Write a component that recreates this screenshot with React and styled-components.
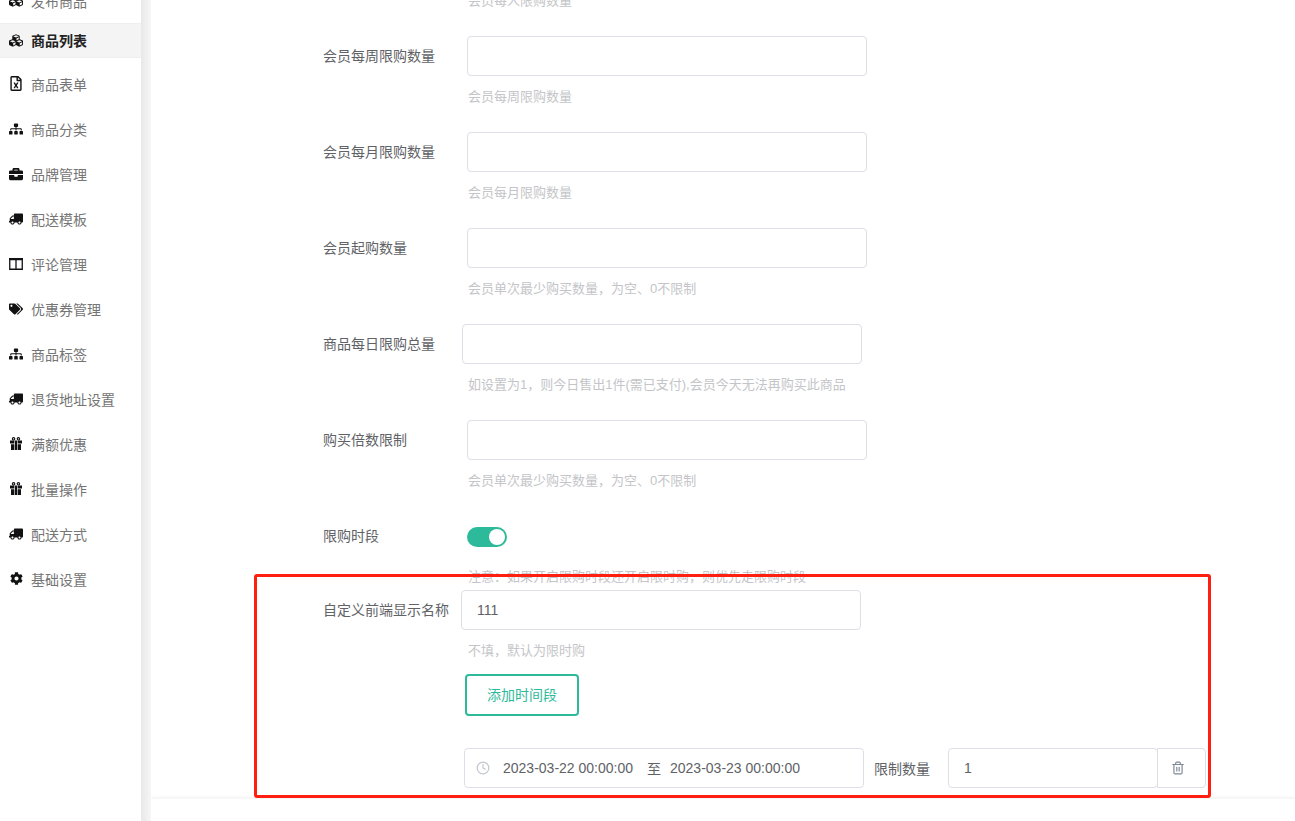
import React from "react";
import styled, { createGlobalStyle } from "styled-components";
import { FaCubes, FaRegFileExcel, FaSitemap, FaBriefcase, FaTruck, FaTags, FaCog } from "react-icons/fa";
import { FiClock, FiTrash2 } from "react-icons/fi";

const GlobalStyle = createGlobalStyle`
  html, body {
    margin: 0;
    height: 100%;
    overflow: hidden;
    background: #fff;
    font-family: "Liberation Sans", "Noto Sans CJK SC", sans-serif;
    font-size: 14px;
    color: #606266;
  }
  * { box-sizing: border-box; }
`;

const Page = styled.div`
  position: relative;
  display: flex;
  width: 1295px;
  height: 821px;
  overflow: hidden;
`;

const Sidebar = styled.nav`
  width: 141px;
  flex-shrink: 0;
  background: #fff;
  margin-top: -22px;
`;

const MenuItem = styled.div`
  display: flex;
  align-items: center;
  height: ${(p) => (p.$active ? "35px" : "45px")};
  padding-left: 9px;
  padding-bottom: ${(p) => (p.$active ? "1px" : "0")};
  margin-bottom: ${(p) => (p.$active ? "3px" : "0")};
  color: ${(p) => (p.$active ? "#222" : "#757575")};
  font-weight: ${(p) => (p.$active ? 700 : 400)};
  background: ${(p) => (p.$active ? "#f4f4f4" : "#fff")};
  border-top: ${(p) => (p.$active ? "1px solid #eee" : "none")};
  border-bottom: ${(p) => (p.$active ? "1px solid #eee" : "none")};
`;

const MenuIcon = styled.span`
  display: flex;
  justify-content: center;
  width: 14px;
  margin-right: 8px;
  color: #111;
  font-size: ${(p) => p.$size || 14}px;
  transform: ${(p) => (p.$flip ? "scaleX(-1)" : "none")};
`;

const Gutter = styled.div`
  width: 10px;
  flex-shrink: 0;
  background: linear-gradient(90deg, #e8e8e8, #f6f6f6);
`;

const Main = styled.main`
  flex: 1;
  display: flex;
  flex-direction: column;
  min-width: 0;
`;

const Form = styled.div`
  height: 799px;
  overflow: hidden;
  padding-left: 172px;
`;

const Clip = styled.div`
  margin-top: -20px;
`;

const FootBar = styled.div`
  position: relative;
  flex: 1;
  background: #fff;
  box-shadow: 0 -2px 3px #f4f4f4;
`;

const Row = styled.div`
  display: flex;
  align-items: center;
  height: 40px;
`;

const Label = styled.label`
  flex-shrink: 0;
  width: ${(p) => p.$w || 144}px;
  color: #606266;
  line-height: 20px;
`;

const Field = styled.div`
  display: flex;
  align-items: center;
  width: ${(p) => p.$w || 400}px;
  height: 40px;
  padding: 0 15px;
  background: #fff;
  border: 1px solid #dcdfe6;
  border-radius: 4px;
  color: #606266;
`;

const Help = styled.div`
  height: 56px;
  padding-top: 11px;
  padding-left: 145px;
  color: #c4c5c8;
  font-size: 13px;
  line-height: 20px;
`;

const Switch = styled.span`
  position: relative;
  display: block;
  width: 40px;
  height: 20px;
  border-radius: 10px;
  background: #2dba9a;
`;

const Knob = styled.span`
  position: absolute;
  top: 2px;
  right: 2px;
  width: 16px;
  height: 16px;
  border-radius: 50%;
  background: #fff;
`;

const SwitchRow = styled(Row)`
  height: 20px;
  margin-top: 11px;
`;

const SwitchLabel = styled(Label)`
  padding-bottom: 2px;
`;

const Note = styled.div`
  padding-left: 145px;
  margin-top: 20px;
  height: 23px;
  font-size: 13px;
  line-height: 20px;
  color: #c4c5c8;
`;

const AddButton = styled.button`
  display: block;
  width: 114px;
  height: 42px;
  margin: -12px 0 32px 142px;
  padding: 0 0 2px;
  background: #fff;
  border: 2px solid #2dba9a;
  border-radius: 4px;
  color: #2dba9a;
  font: inherit;
`;

const TimeRow = styled.div`
  display: flex;
  align-items: center;
  height: 40px;
  padding-left: 141px;
`;

const DateField = styled(Field)`
  padding: 0 0 0 11px;
`;

const ClockIcon = styled(FiClock)`
  flex-shrink: 0;
  color: #c0c4cc;
  font-size: 14px;
  margin-right: 13px;
`;

const DateText = styled.span`
  width: 130px;
  white-space: nowrap;
`;

const Sep = styled.span`
  width: 37px;
  padding-right: 9px;
  text-align: right;
`;

const TimeLabel = styled.span`
  margin: 0 18px 0 10px;
  color: #606266;
`;

const Group = styled.div`
  display: flex;
  width: 258px;
  height: 40px;
`;

const GroupInput = styled(Field)`
  width: 210px;
  flex-shrink: 0;
`;

const GroupAddon = styled.div`
  flex: 1;
  display: flex;
  align-items: center;
  justify-content: center;
  margin-left: -1px;
  padding-right: 7px;
  border: 1px solid #dcdfe6;
  border-radius: 0 4px 4px 0;
  color: #7f8796;
  font-size: 14px;
`;

const RedBox = styled.div`
  position: absolute;
  left: 254px;
  top: 574px;
  width: 957px;
  height: 224px;
  border: 3px solid #ff1f10;
  border-radius: 3px;
  pointer-events: none;
`;

const ColumnsIcon = () => (
  <svg width="14" height="12" viewBox="0 0 14 12" aria-hidden="true">
    <path d="M.75 1.5h12.5v9.75H.75z M7 1.5v9.75" fill="none" stroke="currentColor" strokeWidth="1.3" />
    <path d="M0 0h14v2H0z" fill="currentColor" />
  </svg>
);

const GiftIcon = () => (
  <svg width="12" height="13" viewBox="0 0 12 13" aria-hidden="true">
    <circle cx="3.6" cy="1.8" r="1.2" fill="none" stroke="currentColor" strokeWidth="1.1" />
    <circle cx="8.4" cy="1.8" r="1.2" fill="none" stroke="currentColor" strokeWidth="1.1" />
    <path d="M0 3.6h4.4v3H0z M7.6 3.6H12v3H7.6z M5 3.6h2v9.4H5z M1 7.2h3.4V13H1z M7.6 7.2H11V13H7.6z" fill="currentColor" />
  </svg>
);

const menu = [
  { icon: FaCubes, size: 17, text: "发布商品" },
  { icon: FaCubes, size: 17, text: "商品列表", active: true },
  { icon: FaRegFileExcel, size: 15, text: "商品表单" },
  { icon: FaSitemap, text: "商品分类" },
  { icon: FaBriefcase, text: "品牌管理" },
  { icon: FaTruck, text: "配送模板", flip: true },
  { icon: ColumnsIcon, text: "评论管理" },
  { icon: FaTags, text: "优惠券管理" },
  { icon: FaSitemap, text: "商品标签" },
  { icon: FaTruck, text: "退货地址设置", flip: true },
  { icon: GiftIcon, text: "满额优惠" },
  { icon: GiftIcon, text: "批量操作" },
  { icon: FaTruck, text: "配送方式", flip: true },
  { icon: FaCog, size: 13, text: "基础设置" },
];

const limits = [
  { label: "会员每周限购数量", help: "会员每周限购数量" },
  { label: "会员每月限购数量", help: "会员每月限购数量" },
  { label: "会员起购数量", help: "会员单次最少购买数量，为空、0不限制" },
  { label: "商品每日限购总量", help: "如设置为1，则今日售出1件(需已支付),会员今天无法再购买此商品", w: 139 },
  { label: "购买倍数限制", help: "会员单次最少购买数量，为空、0不限制" },
];

export default function App() {
  return (
    <Page>
      <GlobalStyle />
      <Sidebar>
        {menu.map((m) => (
          <MenuItem key={m.text} $active={m.active}>
            <MenuIcon $flip={m.flip} $size={m.size}>
              <m.icon />
            </MenuIcon>
            {m.text}
          </MenuItem>
        ))}
      </Sidebar>
      <Gutter />
      <Main>
        <Form>
          <Clip>
            <Help>会员每人限购数量</Help>
            {limits.map((r) => (
              <React.Fragment key={r.label}>
                <Row>
                  <Label $w={r.w}>{r.label}</Label>
                  <Field />
                </Row>
                <Help>{r.help}</Help>
              </React.Fragment>
            ))}
            <SwitchRow>
              <SwitchLabel>限购时段</SwitchLabel>
              <Switch>
                <Knob />
              </Switch>
            </SwitchRow>
            <Note>注意：如果开启限购时段还开启限时购，则优先走限购时段</Note>
            <Row>
              <Label $w={138}>自定义前端显示名称</Label>
              <Field>111</Field>
            </Row>
            <Help>不填，默认为限时购</Help>
            <AddButton>添加时间段</AddButton>
            <TimeRow>
              <DateField>
                <ClockIcon />
                <DateText>2023-03-22 00:00:00</DateText>
                <Sep>至</Sep>
                <DateText>2023-03-23 00:00:00</DateText>
              </DateField>
              <TimeLabel>限制数量</TimeLabel>
              <Group>
                <GroupInput>1</GroupInput>
                <GroupAddon>
                  <FiTrash2 />
                </GroupAddon>
              </Group>
            </TimeRow>
          </Clip>
        </Form>
        <FootBar />
      </Main>
      <RedBox />
    </Page>
  );
}
